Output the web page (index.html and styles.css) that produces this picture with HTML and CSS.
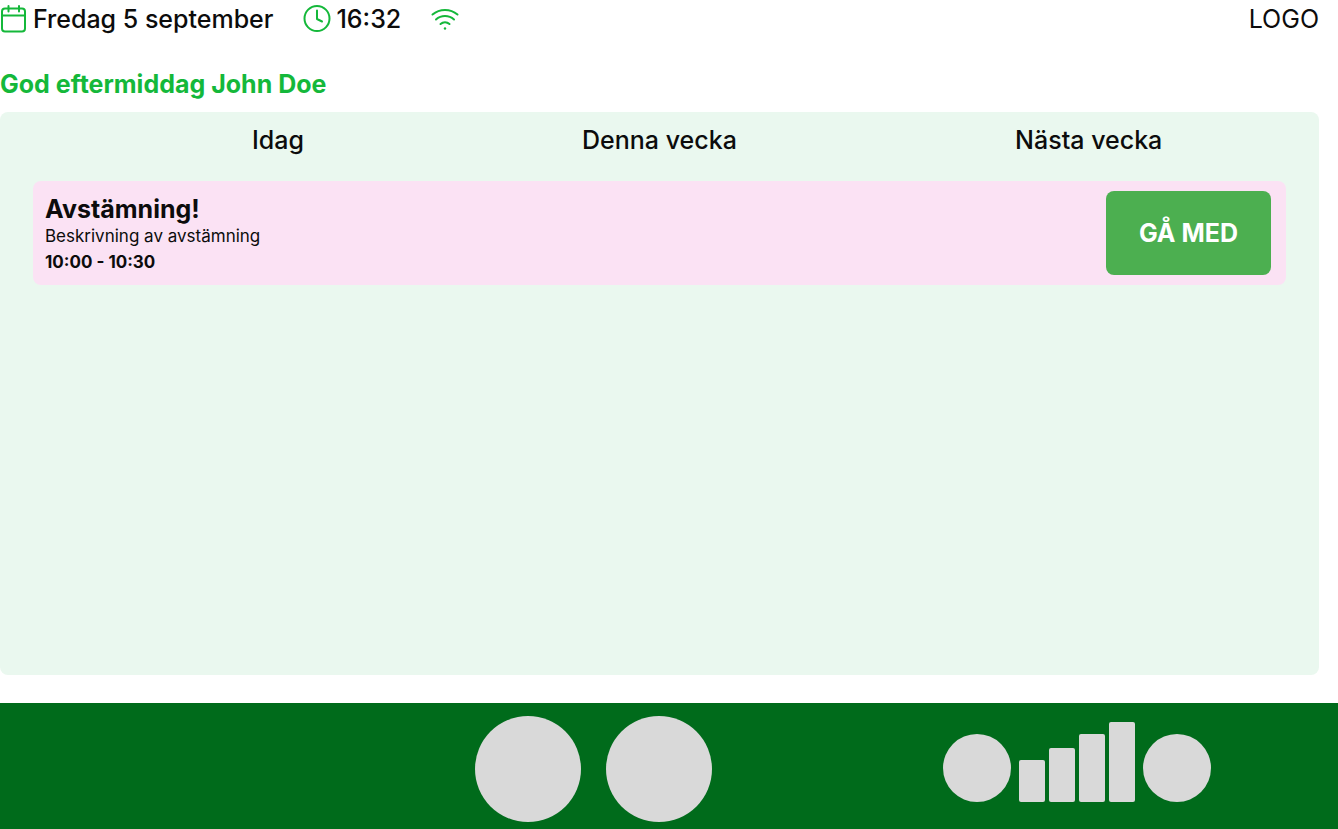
FILE: index.html
```html
<!DOCTYPE html>
<html lang="sv">
  <head>
    <meta charset="UTF-8" />
    <meta name="viewport" content="width=device-width, initial-scale=1.0" />
    <title>Avstämningar</title>
    <link rel="stylesheet" href="styles.css">
  </head>
  <body>
    <div class="main">
      <header class="topbar">
        <div class="topbar-item">
          <svg class="icon" viewBox="0 0 28 28">
            <rect x="2" y="3.500" width="23" height="23" rx="3" />
            <path d="M2 10.500h23M8.500 1v5.500M19 1v5.500" />
          </svg>
          <span>Fredag 5 september</span>
        </div>
        <div class="topbar-item">
          <svg class="icon" viewBox="0 0 28 28">
            <circle cx="14" cy="13.500" r="12.500" />
            <path d="M14 5.500v8.500l5 2.500" />
          </svg>
          <span>16:32</span>
        </div>
        <div class="topbar-item">
          <svg class="icon" viewBox="0 0 28 28">
            <path d="M1.500 9.500a19.500 19.500 0 0 1 25 0M5 14.500a13.500 13.500 0 0 1 18 0M9.500 19a7 7 0 0 1 9 0" />
            <circle class="dot" cx="14" cy="23.500" r="1.200" />
          </svg>
        </div>
        <span class="logo">LOGO</span>
      </header>

      <h1 class="greeting">God eftermiddag John Doe</h1>

      <section class="panel">
        <nav class="tabs">
          <button type="button" class="tab">Idag</button>
          <button type="button" class="tab">Denna vecka</button>
          <button type="button" class="tab">Nästa vecka</button>
        </nav>
        <article class="meeting">
          <div class="meeting-info">
            <h2 class="meeting-title">Avstämning!</h2>
            <p class="meeting-text">Beskrivning av avstämning</p>
            <p class="meeting-time">10:00 - 10:30</p>
          </div>
          <button type="button" class="join">GÅ MED</button>
        </article>
      </section>
    </div>

    <footer class="controls">
      <div class="call">
        <button type="button" class="round large" aria-label="Mikrofon"></button>
        <button type="button" class="round large" aria-label="Kamera"></button>
      </div>
      <div class="volume">
        <button type="button" class="round" aria-label="Sänk volymen"></button>
        <div class="bars">
          <span class="bar level-1"></span>
          <span class="bar level-2"></span>
          <span class="bar level-3"></span>
          <span class="bar level-4"></span>
        </div>
        <button type="button" class="round" aria-label="Höj volymen"></button>
      </div>
    </footer>
  </body>
</html>
```

FILE: styles.css
```css
* {
  padding: 0;
  margin: 0;
  box-sizing: border-box;
  font-family: "Inter", sans-serif;
}

body {
  min-height: 100vh;
  display: flex;
  flex-direction: column;
  background-color: #fff;
  color: #0c0c0c;
}

.main {
  flex: 1;
  display: flex;
  flex-direction: column;
  padding-right: 19px;
}

/* date, time and wifi */
.topbar {
  display: flex;
  align-items: center;
  gap: 30px;
  height: 38px;
  font-size: 25px;
  font-weight: 500;
}

.topbar-item {
  display: flex;
  align-items: center;
  gap: 5px;
}

.icon {
  width: 28px;
  height: 28px;
  fill: none;
  stroke: #14b83a;
  stroke-width: 2;
  stroke-linecap: round;
  stroke-linejoin: round;
}

.icon .dot {
  fill: #14b83a;
  stroke: none;
}

.logo {
  margin-left: auto;
  font-weight: 400;
}

.greeting {
  margin: 30px 0 12px;
  font-size: 25px;
  line-height: 32px;
  font-weight: 700;
  color: #14b83a;
}

.panel {
  flex: 1;
  margin-bottom: 28px;
  padding: 12px 33px;
  border-radius: 8px;
  background-color: #eaf8ef;
}

.tabs {
  display: grid;
  grid-template-columns: 1fr auto 1fr;
  column-gap: 22.2%;
  margin-bottom: 25px;
}

.tab {
  justify-self: start;
  border: none;
  background-color: transparent;
  color: #0c0c0c;
  font-size: 25px;
  line-height: 32px;
  font-weight: 500;
}

.tab:first-child {
  justify-self: end;
}

.meeting {
  display: flex;
  justify-content: space-between;
  align-items: center;
  padding: 10px 15px 10px 12px;
  border-radius: 8px;
  background-color: #fbe2f4;
}

.meeting-info {
  padding-top: 4px;
}

.meeting-title {
  font-size: 25px;
  line-height: 28px;
  font-weight: 700;
}

.meeting-text {
  font-size: 17px;
  line-height: 26px;
}

.meeting-time {
  font-size: 17px;
  line-height: 26px;
  font-weight: 700;
}

.join {
  padding: 26px 33px;
  border: none;
  border-radius: 8px;
  background-color: #4caf50;
  color: #fff;
  font-size: 25px;
  line-height: 32px;
  font-weight: 700;
}

/* bottom bar */
.controls {
  display: flex;
  justify-content: flex-end;
  align-items: center;
  gap: 19.1%;
  padding: 13px 9.5% 7px 0;
  background-color: #006b1b;
}

.call {
  display: flex;
  gap: 25px;
}

.volume {
  display: flex;
  align-items: flex-end;
  gap: 8px;
  margin-bottom: 14px;
}

.round {
  width: 68px;
  height: 68px;
  border: none;
  border-radius: 50%;
  background-color: #d9d9d9;
}

.round.large {
  width: 106px;
  height: 106px;
}

.bars {
  display: flex;
  align-items: flex-end;
  gap: 4px;
}

.bar {
  width: 26px;
  border-radius: 2px;
  background-color: #d9d9d9;
}

.level-1 {
  height: 42px;
}

.level-2 {
  height: 54px;
}

.level-3 {
  height: 68px;
}

.level-4 {
  height: 80px;
}
```
